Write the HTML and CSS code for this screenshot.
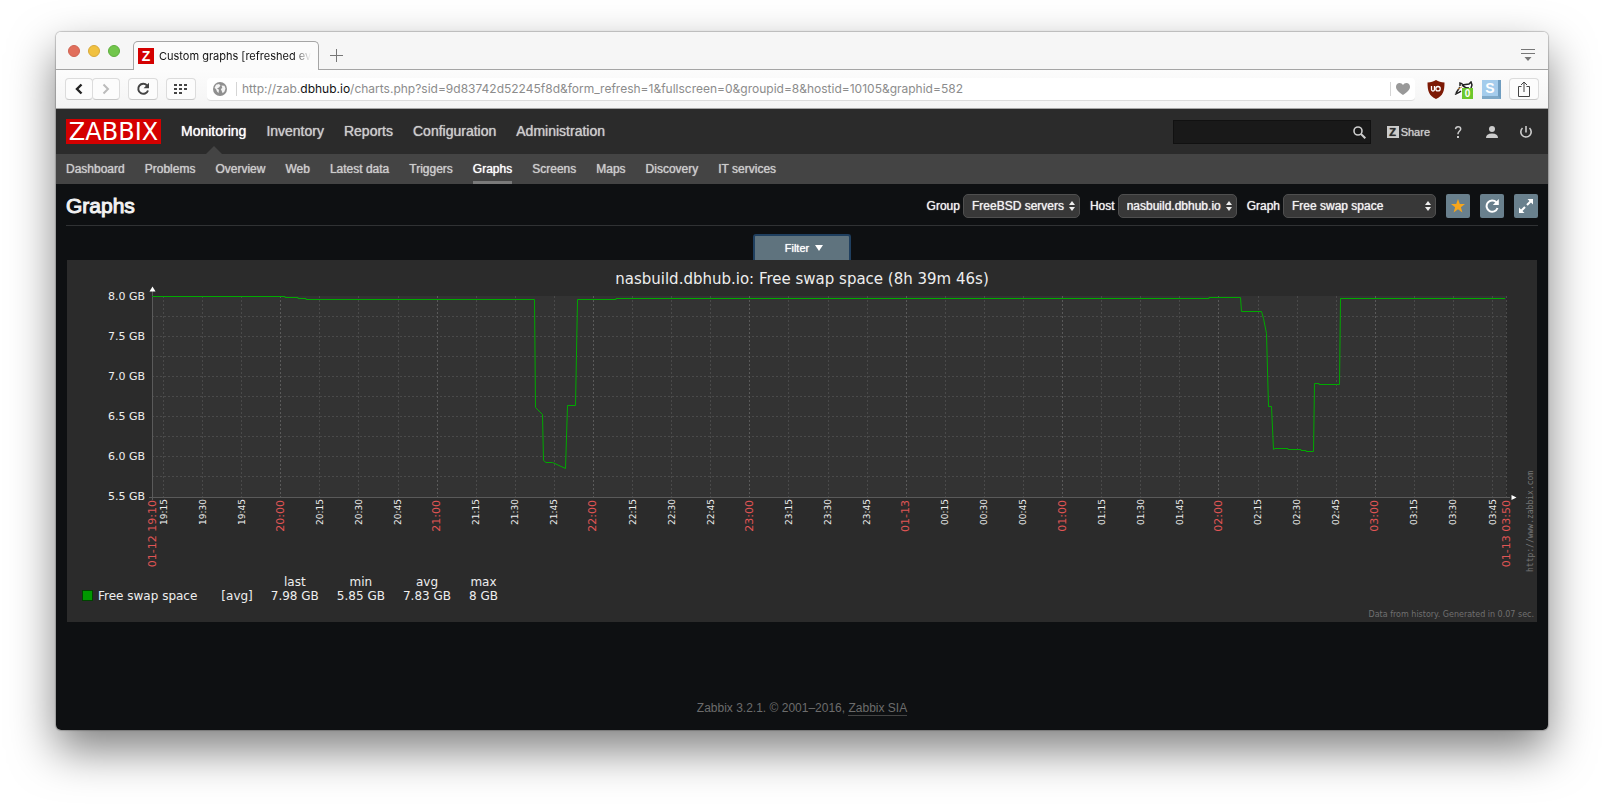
FILE: index.html
```html
<!DOCTYPE html>
<html lang="en">
<head>
  <meta charset="UTF-8" />
  <meta name="viewport" content="width=device-width, initial-scale=1.0"/>
  <title>Custom graphs [refreshed every 30 sec.]</title>
  <link rel="stylesheet" href="styles.css">
</head>
<body>

  <div class="window">

    <div class="tab-bar">
      <div class="lights">
        <span class="light red"></span>
        <span class="light yellow"></span>
        <span class="light green"></span>
      </div>
      <div class="tab">
        <span class="favicon">Z</span>
        <span class="tab-title">Custom graphs [refreshed ev</span>
      </div>
      <button class="plain-btn new-tab" aria-label="New tab">
        <svg width="13" height="13" viewBox="0 0 13 13"><path d="M6.500 0v13M0 6.500h13" stroke="#777" fill="none"/></svg>
      </button>
      <button class="plain-btn tab-menu" aria-label="Tab menu">
        <svg width="14" height="12" viewBox="0 0 14 12"><path d="M0 .5h14M0 4.500h14" stroke="#777"/><path d="M3.500 8h7L7 12z" fill="#777"/></svg>
      </button>
    </div>

    <div class="toolbar">
      <div class="btn-pair">
        <button class="tool-btn" aria-label="Back">
          <svg width="8" height="12" viewBox="0 0 8 12"><path d="M6.500 1.500L2 6l4.500 4.500" stroke="#222" stroke-width="2.400" fill="none"/></svg>
        </button>
        <button class="tool-btn" aria-label="Forward">
          <svg width="8" height="12" viewBox="0 0 8 12"><path d="M1.500 1.500L6 6l-4.500 4.500" stroke="#bbb" stroke-width="2" fill="none"/></svg>
        </button>
      </div>
      <button class="tool-btn wide" aria-label="Reload">
        <svg width="14" height="14" viewBox="0 0 14 14"><path d="M11 3.500A5 5 0 1 0 12 8.500" stroke="#444" stroke-width="2" fill="none"/><path d="M13 .8v5.400H7.600z" fill="#444"/></svg>
      </button>
      <button class="tool-btn wide" aria-label="Speed dial">
        <svg width="14" height="12" viewBox="0 0 14 12" fill="#444"><path d="M0 1h3v2H0zM5 1h3v2H5zM10 1h3v2h-3zM0 5h3v2H0zM5 5h3v2H5zM10 5h3v2h-3zM0 9h3v2H0zM5 9h3v2H5z"/></svg>
      </button>
      <div class="address">
        <svg width="14" height="14" viewBox="0 0 14 14"><circle cx="7" cy="7" r="7" fill="#8f8f8f"/><path d="M3 2.800L6 2l1.500 1.500L6 5.500 4 6.500l2 1.300L5.500 11 4 9.500 3 7 1.500 6zM8.500 3.500l3 .2 1 2.800-1 3-1.800 1.700-1.200-2.700L7.800 7l1.500-1z" fill="#f4f4f4"/></svg>
        <span class="divider"></span>
        <span class="url">http://zab.<b>dbhub.io</b>/charts.php?sid=9d83742d52245f8d&amp;form_refresh=1&amp;fullscreen=0&amp;groupid=8&amp;hostid=10105&amp;graphid=582</span>
        <span class="divider"></span>
        <button class="plain-btn" aria-label="Bookmark">
          <svg width="14" height="12" viewBox="0 0 14 12"><path d="M7 12C3 9.500 0 7 0 3.800 0 1.500 1.600 0 3.600 0 5 0 6.300.8 7 2 7.700.8 9 0 10.400 0 12.400 0 14 1.500 14 3.800 14 7 11 9.500 7 12z" fill="#999"/></svg>
        </button>
      </div>
      <div class="extensions">
        <svg width="18" height="19" viewBox="0 0 18 19"><path d="M9 0c2.500 1.600 5 2.300 8.500 2.500C17.500 11 16 16 9 19 2 16 .5 11 .5 2.500 4 2.300 6.500 1.600 9 0z" fill="#7d1a05"/><path d="M4.500 6v3.300a1.500 1.500 0 0 0 3 .4V6" stroke="#fff" stroke-width="1.300" fill="none"/><circle cx="11" cy="8.700" r="2.200" stroke="#fff" stroke-width="1.300" fill="none"/></svg>
        <span class="badger">
          <svg width="19" height="16" viewBox="0 0 19 16"><path d="M1 13C2 9 5 6 6 3l2 1 6-1 2-1 2 2-1 3-6 6-6 1z" fill="#fff"/><path d="M1 13.500C3 12 5 12 7 10M2 12L6 6M6 5V2l2.500 1M8 4l7-1 2-2 1 3-1 3M8 4c2 2 4 3 7 3" stroke="#222" stroke-width="1.500" fill="none"/><path d="M4 8l4-2" stroke="#e0a050" fill="none"/></svg>
          <span class="badge">0</span>
        </span>
        <span class="s-block">S</span>
      </div>
      <button class="tool-btn wide" aria-label="Share">
        <svg width="12" height="16" viewBox="0 0 12 16"><path d="M3.500 5.500h-3v10h11v-10h-3M6 11V1M3 4l3-3 3 3" stroke="#444" fill="none"/></svg>
      </button>
    </div>

    <div class="page">
      <header class="top-nav">
        <a class="logo" href="#">ZABBIX</a>
        <nav class="main-menu">
          <a href="#" class="selected">Monitoring</a>
          <a href="#">Inventory</a>
          <a href="#">Reports</a>
          <a href="#">Configuration</a>
          <a href="#">Administration</a>
        </nav>
        <form class="search">
          <input type="text" aria-label="Search">
          <button type="button" class="plain-btn" aria-label="Search">
            <svg width="13" height="13" viewBox="0 0 13 13"><circle cx="5" cy="5" r="4" stroke="#ccc" stroke-width="1.600" fill="none"/><path d="M8 8l4.300 4.300" stroke="#ccc" stroke-width="2"/></svg>
          </button>
        </form>
        <a class="share" href="#"><span class="share-z">Z</span>Share</a>
        <div class="user-menu">
          <a href="#" aria-label="Help"><svg width="12" height="12" viewBox="0 0 12 12"><path d="M3.500 3.200C3.700 1.500 4.700.8 6.100.8c1.500 0 2.600.9 2.600 2.200C8.700 5 6 5 6 7.800v.4" stroke="#ccc" stroke-width="1.500" fill="none"/><path d="M5 10h2v2H5z" fill="#ccc"/></svg></a>
          <a href="#" aria-label="Profile"><svg width="12" height="12" viewBox="0 0 12 12" fill="#ccc"><circle cx="6" cy="3" r="3"/><path d="M0 12c0-3 2-4.500 6-4.500s6 1.500 6 4.500z"/></svg></a>
          <a href="#" aria-label="Sign out"><svg width="12" height="12" viewBox="0 0 12 12"><path d="M2.500 2a5.200 5.200 0 1 0 7 0M6 0v6.500" stroke="#ccc" stroke-width="1.600" fill="none"/></svg></a>
        </div>
      </header>

      <nav class="sub-menu">
        <a href="#">Dashboard</a>
        <a href="#">Problems</a>
        <a href="#">Overview</a>
        <a href="#">Web</a>
        <a href="#">Latest data</a>
        <a href="#">Triggers</a>
        <a href="#" class="selected">Graphs</a>
        <a href="#">Screens</a>
        <a href="#">Maps</a>
        <a href="#">Discovery</a>
        <a href="#">IT services</a>
      </nav>

      <main>
        <div class="title-row">
          <h1>Graphs</h1>
          <form class="selectors">
            <label for="groupid">Group</label>
            <span class="select-wrap">
              <select id="groupid"><option>FreeBSD servers</option></select>
              <svg width="6" height="10" viewBox="0 0 6 10"><path d="M3 0l3 4H0zM3 10l3-4H0z" fill="#eee"/></svg>
            </span>
            <label for="hostid">Host</label>
            <span class="select-wrap">
              <select id="hostid"><option>nasbuild.dbhub.io</option></select>
              <svg width="6" height="10" viewBox="0 0 6 10"><path d="M3 0l3 4H0zM3 10l3-4H0z" fill="#eee"/></svg>
            </span>
            <label for="graphid">Graph</label>
            <span class="select-wrap">
              <select id="graphid" class="graph-select"><option>Free swap space</option></select>
              <svg width="6" height="10" viewBox="0 0 6 10"><path d="M3 0l3 4H0zM3 10l3-4H0z" fill="#eee"/></svg>
            </span>
          </form>
          <div class="actions">
            <button class="icon-btn" aria-label="Remove from favourites">
              <svg width="14" height="14" viewBox="0 0 14 14"><path d="M7 0l1.800 5H14L9.900 8.200 11.400 13.500 7 10.300 2.600 13.500 4.100 8.200 0 5h5.200z" fill="#f7a61b"/></svg>
            </button>
            <button class="icon-btn" aria-label="Refresh">
              <svg width="14" height="14" viewBox="0 0 14 14"><path d="M11.300 3.300A5.600 5.600 0 1 0 12.500 9" stroke="#fff" stroke-width="2" fill="none"/><path d="M13.800 0v6H7.800z" fill="#fff"/></svg>
            </button>
            <button class="icon-btn" aria-label="Fullscreen">
              <svg width="14" height="14" viewBox="0 0 14 14"><path d="M8 6l4-4M6 8l-4 4" stroke="#fff" stroke-width="2"/><path d="M8.500 0H14v5.500zM0 8.500V14h5.500z" fill="#fff"/></svg>
            </button>
          </div>
        </div>

        <div class="filter-row">
          <button class="filter-btn">Filter
            <svg width="8" height="6" viewBox="0 0 8 6"><path d="M0 0h8L4 6z" fill="#fff"/></svg>
          </button>
        </div>

        <section class="chart">
          <h2>nasbuild.dbhub.io: Free swap space (8h 39m 46s)</h2>
          <svg id="plot" viewBox="0 28 1470 287">
            <rect x="85" y="36" width="1354" height="201" fill="#333"/>
            <g id="grid"></g>
            <path class="axis" d="M85.500 28v212M82 237.500h1361"/>
            <path d="M85.500 26.500l3 5h-6z" fill="#fff"/>
            <path d="M1444.500 235v5l5-2.500z" fill="#fff"/>
            <polyline class="line" points="85,36.500 218,36.500 218,37.500 231,37.500 231,38.500 239,38.500 239,39.500 467.500,39.500 468.500,147.500 475.500,154.500 476.500,200.500 479,202.500 485.500,202.500 498.500,208.500 500.500,145.500 508.500,145.500 510.500,39.500 549,39.500 549,38.500 1142,38.500 1142,37.500 1173.500,37.500 1174.500,51.500 1194.500,51.500 1196.500,58.500 1199.500,73.500 1201.500,146.500 1204.500,146.500 1206.500,189.500 1208,188.500 1221,188.500 1221,189.500 1234,189.500 1234,190.500 1239,190.500 1239,191.500 1246.500,191.500 1247.500,123.500 1252,123.500 1252,124.500 1272.500,124.500 1273.500,38.500 1438,38.500"/>
            <g id="labels"></g>
            <text class="site" transform="translate(1466 312) rotate(-90)">http://www.zabbix.com</text>
          </svg>
          <table class="legend">
            <tr><td class="series"></td><td></td><th>last</th><th>min</th><th>avg</th><th>max</th></tr>
            <tr><td class="series"><span class="swatch"></span>Free swap space</td><td>[avg]</td><td>7.98 GB</td><td>5.85 GB</td><td>7.83 GB</td><td>8 GB</td></tr>
          </table>
          <p class="generated">Data from history. Generated in 0.07 sec.</p>
        </section>
      </main>

      <footer>Zabbix 3.2.1. © 2001–2016, <a href="#">Zabbix SIA</a></footer>
    </div>
  </div>

  <script src="script.js"></script>
</body>
</html>
```
FILE: styles.css
```css
body {
  box-sizing: border-box;
  min-height: 100vh;
  margin: 0;
  padding: 32px 56px 80px;
  background: #fff;
  font-family: "Liberation Sans", Arial, sans-serif;
  font-size: 12px;
}

a {
  color: inherit;
  text-decoration: none;
}

svg {
  display: block;
  flex: none;
}

button {
  font: inherit;
  padding: 0;
}

.window {
  border-radius: 5px;
  box-shadow: 0 0 1px 1px rgba(0,0,0,0.2), 0 20px 45px rgba(0,0,0,0.5);
}

.plain-btn {
  border: none;
  background: none;
}

/* browser tabs */
.tab-bar {
  display: flex;
  height: 37px;
  background: #f6f6f6;
  border-bottom: 1px solid #a5a5a5;
  border-radius: 5px 5px 0 0;
}

.lights {
  display: flex;
  gap: 8px;
  padding: 13px 13px 0 12px;
}

.light {
  box-sizing: border-box;
  width: 12px;
  height: 12px;
  border-radius: 50%;
}

.red {
  background: #e16f5c;
  border: 1px solid #cf6352;
}

.yellow {
  background: #f1c140;
  border: 1px solid #d8a93a;
}

.green {
  background: #72c64c;
  border: 1px solid #5fae3e;
}

.tab {
  box-sizing: border-box;
  display: flex;
  align-items: center;
  gap: 5px;
  width: 186px;
  height: 29px;
  margin-top: 9px;
  padding: 0 4px;
  background: #fbfbfb;
  border: 1px solid #a5a5a5;
  border-bottom: none;
  border-radius: 5px 5px 0 0;
}

.favicon {
  flex: none;
  width: 16px;
  height: 16px;
  background: #d40000;
  color: #fff;
  font-size: 14px;
  font-weight: bold;
  line-height: 16px;
  text-align: center;
}

.tab-title {
  white-space: nowrap;
  font-family: Inter, sans-serif;
  font-size: 11px;
  color: #111;
  -webkit-mask-image: linear-gradient(to right, #000 88%, transparent);
  mask-image: linear-gradient(to right, #000 88%, transparent);
}

.new-tab {
  padding: 9px 0 0 11px;
}

.tab-menu {
  margin-left: auto;
  padding: 8px 13px 0 0;
}

/* browser toolbar */
.toolbar {
  display: flex;
  align-items: center;
  gap: 8px;
  height: 38px;
  padding: 0 9px;
  background: linear-gradient(#fcfcfc, #f4f4f4);
  border-bottom: 1px solid #a5a5a5;
}

.btn-pair {
  display: flex;
}

.tool-btn {
  box-sizing: border-box;
  display: flex;
  align-items: center;
  justify-content: center;
  width: 28px;
  height: 22px;
  background: #fcfcfc;
  border: 1px solid #dcdcdc;
  border-bottom-color: #c8c8c8;
  border-radius: 4px;
}

.btn-pair .tool-btn + .tool-btn {
  margin-left: -1px;
}

.wide {
  width: 30px;
}

.address {
  display: flex;
  flex: 1;
  align-items: center;
  gap: 5px;
  min-width: 0;
  height: 22px;
  margin-left: 3px;
  padding: 0 5px 0 6px;
  background: #fff;
  border-bottom: 1px solid #dcdcdc;
  border-radius: 4px;
}

.divider {
  flex: none;
  width: 1px;
  height: 14px;
  margin-left: 4px;
  background: #d5d5d5;
}

.url {
  flex: 1;
  overflow: hidden;
  white-space: nowrap;
  font-family: Inter, sans-serif;
  font-size: 12px;
  color: #8c8c8c;
}

.url b {
  font-weight: normal;
  color: #111;
}

.extensions {
  display: flex;
  align-items: center;
  gap: 9px;
  padding: 0 0 0 4px;
}

.badger {
  position: relative;
}

.badge {
  position: absolute;
  right: 0;
  bottom: -2px;
  width: 11px;
  height: 11px;
  background: #6dc82c;
  color: #fff;
  font-size: 10px;
  font-weight: bold;
  line-height: 11px;
  text-align: center;
}

.s-block {
  box-sizing: border-box;
  width: 19px;
  height: 19px;
  background: #a4ccec;
  border-right: 3px solid #6f9dc0;
  border-bottom: 3px solid #7fa9c8;
  color: #fff;
  font-size: 14px;
  font-weight: bold;
  line-height: 16px;
  text-align: center;
}

/* zabbix header */
.page {
  background: #0e1012;
  border-radius: 0 0 5px 5px;
  overflow: hidden;
}

.top-nav {
  display: flex;
  align-items: center;
  height: 45px;
  padding: 0 10px;
  background: #2b2b2b;
}

.logo {
  width: 95px;
  height: 25px;
  background: #d40000;
  color: #fff;
  font-family: "DejaVu Sans", sans-serif;
  font-size: 24px;
  line-height: 26px;
  text-align: center;
}

.main-menu {
  display: flex;
  gap: 20px;
  margin-left: 20px;
  font-size: 14px;
  line-height: 45px;
  color: #ccc;
  text-shadow: 0 0 1px currentColor;
}

.selected {
  position: relative;
  color: #fff;
}

.main-menu .selected::after {
  content: "";
  position: absolute;
  left: 50%;
  bottom: 0;
  margin-left: -8px;
  border: 8px solid transparent;
  border-top: none;
  border-bottom-color: #444;
}

.search {
  position: relative;
  margin-left: auto;
}

.search input {
  box-sizing: border-box;
  display: block;
  width: 198px;
  height: 24px;
  background: #191919;
  border: 1px solid #111;
  color: #ccc;
}

.search button {
  position: absolute;
  top: 6px;
  right: 5px;
}

.share {
  display: flex;
  gap: 2px;
  margin: 0 22px 0 16px;
  font-size: 11px;
  line-height: 12px;
  color: #ccc;
  text-shadow: 0 0 1px currentColor;
}

.share-z {
  width: 12px;
  height: 12px;
  background: #ccc;
  color: #2b2b2b;
  font-weight: bold;
  text-align: center;
}

.user-menu {
  display: flex;
  gap: 22px;
  padding-right: 6px;
}

.sub-menu {
  display: flex;
  gap: 20px;
  height: 30px;
  padding: 0 10px;
  background: #444;
  color: #ccc;
  line-height: 30px;
  text-shadow: 0 0 1px currentColor;
}

.sub-menu .selected {
  box-sizing: border-box;
  height: 30px;
  border-bottom: 3px solid #7a7a7a;
}

/* page content */
main {
  padding: 0 10px;
}

.title-row {
  display: flex;
  align-items: center;
  height: 38px;
  padding-top: 3px;
  border-bottom: 1px solid #303234;
  color: #f2f2f2;
}

h1 {
  margin: 0 auto 0 0;
  font-size: 21px;
  font-weight: normal;
  -webkit-text-stroke: 1px currentColor;
}

.selectors {
  display: flex;
  align-items: center;
  text-shadow: 0 0 1px currentColor;
}

.select-wrap {
  position: relative;
  margin: 0 10px 0 3px;
}

.select-wrap svg {
  position: absolute;
  top: 7px;
  right: 5px;
  pointer-events: none;
}

select {
  appearance: none;
  box-sizing: border-box;
  display: block;
  height: 24px;
  padding: 0 14px 0 8px;
  background: #383838;
  border: 1px solid #4f4f4f;
  border-radius: 5px;
  color: #f2f2f2;
  font: inherit;
  text-shadow: inherit;
}

.graph-select {
  width: 153px;
}

.actions {
  display: flex;
  gap: 10px;
}

.icon-btn {
  display: flex;
  align-items: center;
  justify-content: center;
  width: 24px;
  height: 24px;
  background: #69808d;
  border: none;
  border-radius: 2px;
}

.filter-row {
  display: flex;
  justify-content: center;
  padding-top: 8px;
}

.filter-btn {
  box-sizing: border-box;
  display: flex;
  align-items: center;
  justify-content: center;
  gap: 6px;
  width: 98px;
  height: 26px;
  padding-left: 4px;
  background: #5f737e;
  border: 2px solid #1f3f5f;
  border-bottom: none;
  border-radius: 3px 3px 0 0;
  color: #fff;
  font-size: 11px;
  text-shadow: 0 0 1px currentColor;
}

/* chart */
.chart {
  position: relative;
  margin: 0 1px;
  padding-bottom: 19px;
  background: #2b2b2b;
  color: #eee;
  font-family: "DejaVu Sans", sans-serif;
}

h2 {
  margin: 0;
  padding-top: 10px;
  font-size: 15px;
  font-weight: normal;
  line-height: 18px;
  text-align: center;
}

#plot {
  width: 100%;
  overflow: visible;
  fill: #eee;
  font-size: 11px;
}

.grid-line {
  stroke: #4a4a4a;
  stroke-dasharray: 2 2;
}

.grid-line.hour {
  stroke: #5a5a5a;
}

.axis {
  stroke: #5a5a5a;
}

.line {
  fill: none;
  stroke: #00aa00;
}

.minute {
  font-size: 9px;
}

.hour-label {
  fill: #e05555;
}

.site {
  font-family: "DejaVu Sans Mono", monospace;
  font-size: 8px;
  fill: #777;
}

.legend {
  margin-left: 6px;
  border-collapse: collapse;
  font-size: 12px;
  line-height: 14px;
  text-align: center;
}

.legend td,
.legend th {
  padding: 0 9px;
  font-weight: normal;
}

.legend .series {
  padding-right: 15px;
}

.swatch {
  display: inline-block;
  box-sizing: border-box;
  width: 11px;
  height: 11px;
  margin-right: 5px;
  background: #009900;
  border: 1px solid #004400;
  vertical-align: -1px;
}

.generated {
  position: absolute;
  right: 3px;
  bottom: 2px;
  margin: 0;
  font-size: 8px;
  line-height: 10px;
  color: #707070;
}

footer {
  padding: 78px 0 14px;
  color: #6c6c6c;
  line-height: 16px;
  text-align: center;
}

footer a {
  display: inline-block;
  line-height: 14px;
  border-bottom: 1px solid #444;
}
```
FILE: script.js
```js
const NS = 'http://www.w3.org/2000/svg';
const grid = document.getElementById('grid');
const labels = document.getElementById('labels');

const LEFT = 85, RIGHT = 1439, TOP = 36, BOTTOM = 237;

function add(parent, tag, attrs, text) {
  const el = document.createElementNS(NS, tag);
  for (const key in attrs) el.setAttribute(key, attrs[key]);
  if (text) el.textContent = text;
  parent.appendChild(el);
}

function timeLabel(x, y, cls, text) {
  add(labels, 'text', {
    class: cls,
    'text-anchor': 'end',
    transform: `translate(${x + 4} ${y}) rotate(-90)`
  }, text);
}

// value axis, one line per 0.25 GB
for (let i = 0; i <= 10; i++) {
  const y = TOP + i * 20;
  if (i > 0 && i < 10) {
    add(grid, 'path', { class: 'grid-line', d: `M${LEFT} ${y + 0.5}H${RIGHT}` });
  }
  if (i % 2 === 0) {
    add(labels, 'text', { x: 78, y: y + 4, 'text-anchor': 'end' }, (8 - i / 4).toFixed(1) + ' GB');
  }
}

// time axis, one line per 15 minutes from 19:15 to 03:45
for (let i = 0; i <= 34; i++) {
  const minutes = (19 * 60 + 15 + i * 15) % 1440;
  const x = 96 + i * 39.09;
  const line = Math.round(x) + 0.5;
  const hour = String(Math.floor(minutes / 60)).padStart(2, '0');
  const min = String(minutes % 60).padStart(2, '0');
  const full = min === '00';
  add(grid, 'path', { class: full ? 'grid-line hour' : 'grid-line', d: `M${line} ${TOP}V${BOTTOM}` });
  timeLabel(Math.floor(x), full ? 240 : 239, full ? 'hour-label' : 'minute', minutes === 0 ? '01-13' : `${hour}:${min}`);
}
add(grid, 'path', { class: 'grid-line', d: `M${RIGHT + 0.5} ${TOP}V${BOTTOM}` });

timeLabel(LEFT, 240, 'hour-label', '01-12 19:10');
timeLabel(RIGHT, 240, 'hour-label', '01-13 03:50');
```
